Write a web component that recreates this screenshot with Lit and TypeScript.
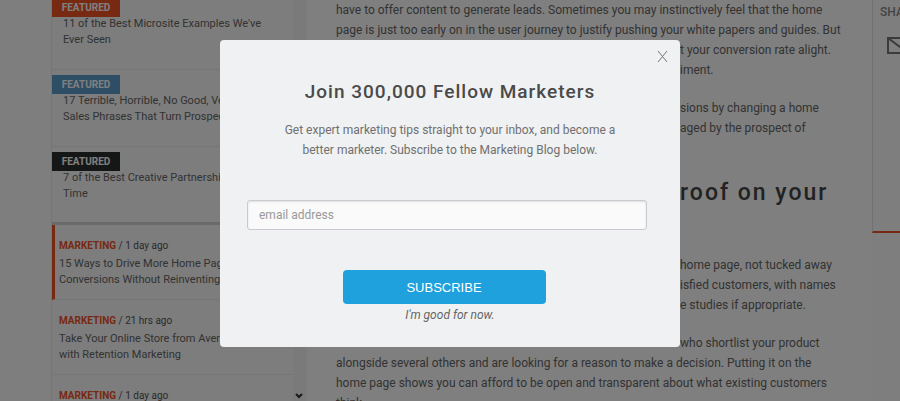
import { LitElement, html, css } from "lit";
import { customElement } from "lit/decorators.js";

interface FeaturedPost { tone: string; title: string[]; }
interface RecentPost { age: string; title: string[]; active?: boolean; }

const FEATURED: FeaturedPost[] = [
  { tone: "orange", title: ["11 of the Best Microsite Examples We've", "Ever Seen"] },
  { tone: "blue", title: ["17 Terrible, Horrible, No Good, Very Bad", "Sales Phrases That Turn Prospects Off"] },
  { tone: "black", title: ["7 of the Best Creative Partnerships of All", "Time"] },
];

const RECENT: RecentPost[] = [
  { age: "1 day ago", title: ["15 Ways to Drive More Home Page", "Conversions Without Reinventing the"], active: true },
  { age: "21 hrs ago", title: ["Take Your Online Store from Average", "with Retention Marketing"] },
  { age: "1 day ago", title: [] },
];

@customElement("blog-sidebar")
export class BlogSidebar extends LitElement {
  static styles = css`
    :host { display: block; margin-top: -2px; background: #fafafa; border-left: 1px solid #ececec; font-size: 11px; line-height: 16px; color: #666; }
    a { color: inherit; text-decoration: none; }
    .line { display: block; white-space: nowrap; }
    .featured { box-sizing: border-box; height: 72px; margin-bottom: 5px; border-bottom: 1px solid #ececec; }
    .featured:last-of-type { height: 70px; margin-bottom: 0; border-bottom: 0; }
    .tag { display: block; width: 68px; height: 19px; margin-bottom: -1px; text-align: center; font-weight: 700; font-size: 10px; line-height: 19px; color: #fff; }
    .orange { background: #f05223; }
    .blue { background: #5c9ccc; }
    .black { background: #2b2e2e; }
    .featured a { display: block; padding: 0 0 0 11px; }
    .list { border-top: 3px solid #d4d4d4; }
    .recent { height: 75px; box-sizing: border-box; padding: 13px 0 0 7px; border-bottom: 1px solid #ececec; }
    .active { border-left: 3px solid #f05223; padding-left: 4px; }
    .meta { margin: 0 0 2px; font-size: 10px; color: #555; }
    .meta b { color: #f05223; }
  `;
  render() {
    return html`
      ${FEATURED.map((p) => html`<section class="featured">
        <span class="tag ${p.tone}">FEATURED</span>
        <a href="#">${p.title.map((t) => html`<span class="line">${t}</span>`)}</a>
      </section>`)}
      <div class="list">
        ${RECENT.map((p) => html`<section class="recent ${p.active ? "active" : ""}">
          <p class="meta"><b>MARKETING</b> / ${p.age}</p>
          <a href="#">${p.title.map((t) => html`<span class="line">${t}</span>`)}</a>
        </section>`)}
      </div>
    `;
  }
}

@customElement("blog-article")
export class BlogArticle extends LitElement {
  static styles = css`
    :host { display: block; font-size: 12px; line-height: 20px; color: #666; }
    p { margin: 0 0 18px; white-space: nowrap; }
    span { display: block; }
    .tail { padding-left: 344px; }
    h2 { margin: 35px 0 42px; font-weight: 500; font-size: 23px; line-height: 40px; letter-spacing: 2px; color: #444; white-space: nowrap; padding-left: 344px; }
  `;
  render() {
    return html`
      <p>
        <span>have to offer content to generate leads. Sometimes you may instinctively feel that the home</span>
        <span>page is just too early on in the user journey to justify pushing your white papers and guides. But</span>
        <span class="tail">t your conversion rate alight.</span>
        <span class="tail">iment.</span>
      </p>
      <p>
        <span class="tail">sions by changing a home</span>
        <span class="tail">aged by the prospect of</span>
      </p>
      <h2>roof on your</h2>
      <p>
        <span class="tail">home page, not tucked away</span>
        <span class="tail">isfied customers, with names</span>
        <span class="tail">e studies if appropriate.</span>
      </p>
      <p>
        <span class="tail">who shortlist your product</span>
        <span>alongside several others and are looking for a reason to make a decision. Putting it on the</span>
        <span>home page shows you can afford to be open and transparent about what existing customers</span>
        <span>think.</span>
      </p>
    `;
  }
}

@customElement("subscribe-dialog")
export class SubscribeDialog extends LitElement {
  static styles = css`
    :host { display: flex; justify-content: center; align-items: flex-start; }
    .dialog { position: relative; box-sizing: border-box; width: 460px; max-width: 90%; padding: 41px 27px 23px; border-radius: 4px; background: #eff1f3; text-align: center; color: #707070; }
    .close { position: absolute; top: 8px; right: 11px; width: 14px; height: 16px; padding: 0; border: 0; background: none; cursor: pointer; }
    .close svg { display: block; width: 14px; height: 16px; }
    h1 { margin: 0 0 17px; font-weight: 500; font-size: 19px; line-height: 22px; letter-spacing: 1px; color: #4a4a4a; }
    p { margin: 0 auto 40px; width: 352px; max-width: 100%; font-size: 12px; line-height: 20px; }
    form { display: flex; flex-direction: column; align-items: center; }
    input { box-sizing: border-box; width: 400px; max-width: 100%; height: 30px; margin-bottom: 40px; padding: 0 11px; align-self: flex-start; border: 1px solid #c8cacd; border-radius: 3px; background: #fafafa; box-shadow: inset 0 1px 2px #dddfe1; font: 12px "Roboto", sans-serif; color: #444; }
    input::placeholder { color: #999; opacity: 1; }
    .go { width: 203px; height: 34px; margin-right: 12px; padding: 0; border: 0; border-radius: 4px; background: #1ea1dc; color: #fff; font: 13px "Liberation Sans", sans-serif; }
    .skip { margin-top: 2px; font: italic 12px/18px "Roboto", sans-serif; color: #666; text-decoration: none; }
  `;
  render() {
    return html`<div class="dialog" role="dialog" aria-labelledby="title">
      <button class="close" aria-label="Close">
        <svg viewBox="0 0 14 16" fill="none" stroke="#777" stroke-width="1"><path d="M3 3l9 11M12 3L3 14" /></svg>
      </button>
      <h1 id="title">Join 300,000 Fellow Marketers</h1>
      <p>Get expert marketing tips straight to your inbox, and become a better marketer. Subscribe to the Marketing Blog below.</p>
      <form>
        <input type="email" placeholder="email address" aria-label="email address" />
        <button class="go" type="button">SUBSCRIBE</button>
        <a class="skip" href="#">I'm good for now.</a>
      </form>
    </div>`;
  }
}

@customElement("app-root")
export class AppRoot extends LitElement {
  static styles = css`
    :host { display: block; position: relative; height: 100vh; overflow: hidden; background: #fdfdfd; font-family: "Roboto", sans-serif; }
    .page { display: grid; grid-template-columns: 51px 242px 14px minmax(0, 1fr) 28px; min-height: 100%; }
    .scroll { display: flex; align-items: end; height: 100vh; background: #f4f4f4; }
    .scroll svg { width: 12px; height: 12px; }
    .main { padding: 0 20px 0 29px; background: #fff; }
    .share { height: 231px; border-left: 1px solid #e2e2e2; border-bottom: 2px solid #f05223; font-size: 12px; color: #888; overflow: hidden; }
    .share b { display: block; padding: 5px 0 0 7px; line-height: 14px; font-weight: 500; white-space: nowrap; }
    .share svg { display: block; margin: 18px 0 0 14px; width: 26px; height: 18px; }
    .overlay { position: absolute; inset: 0; padding-top: 40px; background: rgba(0, 0, 0, 0.5); }
  `;
  render() {
    return html`
      <div class="page">
        <div></div>
        <blog-sidebar></blog-sidebar>
        <div class="scroll"><svg viewBox="0 0 12 12" fill="none" stroke="#333" stroke-width="2"><path d="M3 5l3 3 3-3" /></svg></div>
        <main class="main"><blog-article></blog-article></main>
        <aside class="share"><b>SHARE</b>
          <svg viewBox="0 0 26 18" fill="none" stroke="#777" stroke-width="2"><path d="M1 1h24v15H1zM1 1l12 9L25 1" /></svg>
        </aside>
      </div>
      <subscribe-dialog class="overlay"></subscribe-dialog>
    `;
  }
}
